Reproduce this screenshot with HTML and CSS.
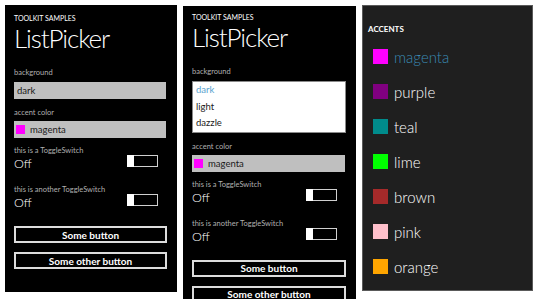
FILE: index.html
```html
<!DOCTYPE html>
<html lang="en">
<head>
    <meta charset="UTF-8">
    <meta name="viewport" content="width=device-width, initial-scale=1.0">
    <title>ListPicker samples</title>
    <link rel="stylesheet" href="styles.css">
</head>
<body>
    <!-- closed pickers -->
    <div class="phone">
        <div class="app-title">TOOLKIT SAMPLES</div>
        <div class="page-title">ListPicker</div>

        <div class="field-label">background</div>
        <div class="picker">dark</div>

        <div class="field-label second">accent color</div>
        <div class="picker tight"><span class="swatch" style="background-color: #ff00ff;"></span>magenta</div>

        <div class="field-label switch-label">this is a ToggleSwitch</div>
        <div class="toggle-row">
            <span class="toggle-state">Off</span>
            <span class="toggle"><span class="knob"></span></span>
        </div>

        <div class="field-label switch-label later">this is another ToggleSwitch</div>
        <div class="toggle-row">
            <span class="toggle-state">Off</span>
            <span class="toggle"><span class="knob"></span></span>
        </div>

        <div class="btn first">Some button</div>
        <div class="btn">Some other button</div>
    </div>

    <!-- background picker expanded -->
    <div class="phone lower">
        <div class="app-title">TOOLKIT SAMPLES</div>
        <div class="page-title">ListPicker</div>

        <div class="field-label">background</div>
        <div class="listbox">
            <div class="option selected">dark</div>
            <div class="option">light</div>
            <div class="option">dazzle</div>
        </div>

        <div class="field-label second">accent color</div>
        <div class="picker tight"><span class="swatch" style="background-color: #ff00ff;"></span>magenta</div>

        <div class="field-label switch-label">this is a ToggleSwitch</div>
        <div class="toggle-row">
            <span class="toggle-state">Off</span>
            <span class="toggle"><span class="knob"></span></span>
        </div>

        <div class="field-label switch-label later">this is another ToggleSwitch</div>
        <div class="toggle-row">
            <span class="toggle-state">Off</span>
            <span class="toggle"><span class="knob"></span></span>
        </div>

        <div class="btn first">Some button</div>
        <div class="btn">Some other button</div>
    </div>

    <!-- full screen accent list -->
    <div class="phone accents">
        <div class="accents-title">ACCENTS</div>
        <ul class="accent-list">
            <li class="accent-item selected"><span class="accent-swatch" style="background-color: #ff00ff;"></span>magenta</li>
            <li class="accent-item"><span class="accent-swatch" style="background-color: #800080;"></span>purple</li>
            <li class="accent-item"><span class="accent-swatch" style="background-color: #008b8b;"></span>teal</li>
            <li class="accent-item"><span class="accent-swatch" style="background-color: #00ff00;"></span>lime</li>
            <li class="accent-item"><span class="accent-swatch" style="background-color: #a52a2a;"></span>brown</li>
            <li class="accent-item"><span class="accent-swatch" style="background-color: #ffc0cb;"></span>pink</li>
            <li class="accent-item"><span class="accent-swatch" style="background-color: #ffa500;"></span>orange</li>
        </ul>
    </div>
</body>
</html>
```

FILE: styles.css
```css
* {
    margin: 0;
    padding: 0;
    box-sizing: border-box;
}

body {
    font-family: Lato, "Open Sans", sans-serif;
    display: flex;
    align-items: flex-start;
    gap: 6px;
    padding: 5px 0 0 5px;
    height: 299px;
    overflow: hidden;
    background-color: #fff;
    color: #fff;
}

.phone {
    width: 172px;
    height: 287px;
    background-color: #000;
    padding: 8px 10px 0 9px;
    overflow: hidden;
}

.phone.lower {
    width: 173px;
    height: 300px;
    margin-top: 1px;
    padding-top: 6px;
}

.app-title {
    font-size: 7px;
    line-height: 10px;
}

.page-title {
    font-size: 26px;
    font-weight: 300;
    line-height: 30px;
    letter-spacing: -1.1px;
}

.field-label {
    margin-top: 15px;
    font-size: 7.5px;
    line-height: 10px;
    color: #b0b0b0;
}

.field-label.second {
    margin-top: 9px;
}

.field-label.switch-label {
    margin-top: 8px;
}

.field-label.later {
    margin-top: 14px;
}

.picker {
    display: flex;
    align-items: center;
    height: 17px;
    margin-top: 4px;
    margin-right: 1px;
    padding-left: 3px;
    background-color: #bfbfbf;
    color: #1a1a1a;
    font-size: 9.5px;
}

.picker.tight {
    margin-top: 3px;
    padding-left: 2px;
}

.swatch {
    width: 9px;
    height: 9px;
    margin-right: 5px;
}

.listbox {
    margin-top: 4px;
    padding-left: 3px;
    background-color: #fff;
    border: 1px solid #8a8a8a;
    color: #1a1a1a;
    font-size: 9.5px;
}

.option {
    line-height: 16.5px;
}

.option.selected {
    color: #5ba3cf;
}

.toggle-row {
    display: flex;
    justify-content: space-between;
    align-items: flex-start;
    margin-top: 1px;
    height: 14px;
}

.toggle-state {
    font-size: 12.5px;
    font-weight: 300;
    line-height: 14px;
}

.toggle {
    display: flex;
    width: 31px;
    height: 12px;
    margin-top: -2px;
    margin-right: 9px;
    border: 1px solid #d0d0d0;
}

.knob {
    width: 7px;
    margin: -1px 0 -1px -1px;
    background-color: #fff;
}

.btn {
    display: flex;
    justify-content: center;
    align-items: center;
    height: 17px;
    margin-top: 9px;
    border: 2px solid #dcdcdc;
    font-size: 10px;
    font-weight: 700;
}

.btn.first {
    margin-top: 16px;
}

.accents {
    width: 171px;
    height: 286px;
    padding: 18px 0 0 10px;
    background-color: #1f1f1f;
    border: 1px solid #5a5a5a;
}

.accents-title {
    margin-left: -5px;
    font-size: 8px;
    font-weight: 700;
    line-height: 10px;
}

.accent-list {
    list-style: none;
    margin-top: 5px;
}

.accent-item {
    display: flex;
    align-items: center;
    gap: 6px;
    height: 35px;
    font-size: 15px;
    font-weight: 300;
}

.accent-item.selected {
    color: #3a8ab3;
}

.accent-swatch {
    width: 15px;
    height: 15px;
}
```
